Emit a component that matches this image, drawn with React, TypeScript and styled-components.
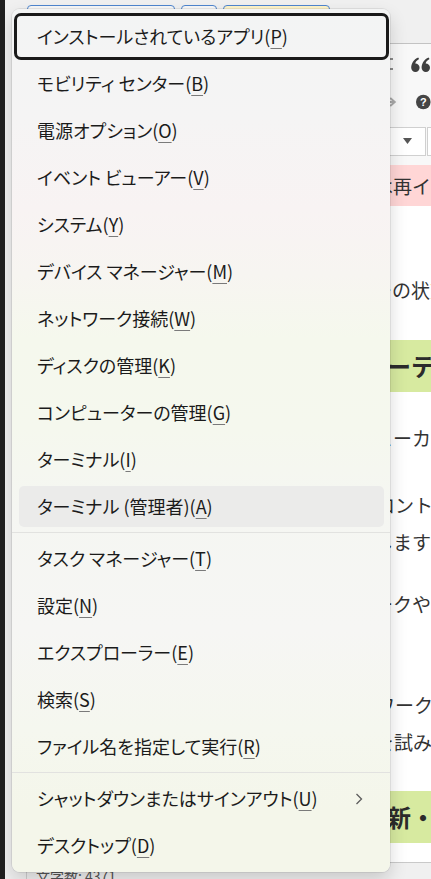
import React from "react";
import styled, { createGlobalStyle } from "styled-components";

const Global = createGlobalStyle`
  html, body { margin: 0; padding: 0; }
  body {
    width: 431px; height: 879px; overflow: hidden;
    font-family: "Noto Sans CJK JP", "Noto Sans", sans-serif;
    background: #f0f0f0;
  }
  #root { width: 431px; height: 879px; }
`;

const Screen = styled.div`
  position: relative;
  display: flex;
  width: 431px;
  height: 879px;
  overflow: hidden;
  background: #f0f0f0;
`;

const DarkStrip = styled.div`
  width: 5px;
  flex: none;
  background: #1f1f1f;
`;

const Main = styled.div`
  flex: 1;
  min-width: 0;
  display: flex;
  flex-direction: column;
`;

const TopBar = styled.div`
  height: 43px;
  flex: none;
  display: flex;
  gap: 6px;
  padding: 5px 0 0 22px;
  box-sizing: border-box;
`;

const TopButton = styled.div<{ $w: number; $warm?: boolean }>`
  width: ${(p) => p.$w}px;
  height: 30px;
  box-sizing: border-box;
  border: 1px solid #4f86cf;
  border-radius: 4px;
  background: ${(p) => (p.$warm ? "linear-gradient(#fdf3c8, #f7f0dc)" : "#f7f7f7")};
`;

const Workspace = styled.div`
  flex: 1;
  display: flex;
  flex-direction: column;
  margin-left: 21px;
  border-top: 1px solid #c3c3c3;
  border-left: 1px solid #cfcfcf;
  min-width: 0;
`;

const Toolbar = styled.div`
  background: #f8f8f8;
  display: flex;
  flex-direction: column;
  height: 121px;
  flex: none;
`;

const ToolRow = styled.div<{ $h: number; $pl: number; $gap: number }>`
  height: ${(p) => p.$h}px;
  display: flex;
  align-items: center;
  gap: ${(p) => p.$gap}px;
  padding-left: ${(p) => p.$pl}px;
  white-space: nowrap;
`;

const Select = styled.div<{ $w: number }>`
  width: ${(p) => p.$w}px;
  height: 29px;
  flex: none;
  box-sizing: border-box;
  border: 1px solid #d0d0d0;
  background: #fff;
  display: flex;
  align-items: center;
  justify-content: flex-end;
  padding-right: 13px;
`;

const Content = styled.div`
  flex: 1;
  background: #fff;
  display: flex;
  flex-direction: column;
  border-bottom: 1px solid #c9c9c9;
  overflow: hidden;
`;

const Notice = styled.div<{ $pl: number }>`
  height: 41px;
  flex: none;
  background: #ffd6d6;
  font-size: 19px;
  line-height: 41px;
  color: #333;
  white-space: nowrap;
  padding-left: ${(p) => p.$pl}px;
`;

const Para = styled.p<{ $mt: number }>`
  margin: ${(p) => p.$mt}px 0 0 0;
  font-size: 19px;
  line-height: 37px;
  color: #333;
  white-space: nowrap;
`;

const Line = styled.span<{ $pl: number }>`
  display: block;
  padding-left: ${(p) => p.$pl}px;
`;

const Heading = styled.h2<{ $mt: number; $pl: number }>`
  margin: ${(p) => p.$mt}px 0 0 0;
  height: 52px;
  flex: none;
  background: #d7eaa0;
  font-size: 24px;
  font-weight: 700;
  line-height: 52px;
  color: #2b2b2b;
  white-space: nowrap;
  padding-left: ${(p) => p.$pl}px;
`;

const StatusBar = styled.div`
  height: 12px;
  flex: none;
  font-size: 14px;
  line-height: 18px;
  color: #555;
  padding: 4px 0 0 9px;
  white-space: nowrap;
  overflow: hidden;
`;

/* ---------- Context menu (overlay) ---------- */

const Menu = styled.div`
  position: absolute;
  left: 12px;
  top: 9px;
  width: 378px;
  height: 863px;
  box-sizing: border-box;
  padding: 4px 0 3px;
  border-radius: 8px;
  z-index: 10;
  background: linear-gradient(
    to bottom,
    #f3f4f4 0px,
    #f5f4f4 110px,
    #f8f3f3 200px,
    #f7f5f1 265px,
    #f5f8ed 330px,
    #f5f8ee 420px,
    #f5f6f2 500px,
    #f6f6f4 620px,
    #f5f7ef 720px,
    #f4f6ea 800px,
    #f4f6ea 863px
  );
  box-shadow: 0 0 0 1px rgba(0, 0, 0, 0.07), 0 8px 18px rgba(0, 0, 0, 0.16);
  font-family: "Noto Sans CJK JP", "Noto Sans", sans-serif;
  font-feature-settings: "palt";
`;

const MenuList = styled.div`
  position: relative;
  isolation: isolate;
  display: flex;
  flex-direction: column;
`;

const Item = styled.div<{ $focused?: boolean; $hover?: boolean }>`
  position: relative;
  height: 47px;
  flex: none;
  display: flex;
  align-items: center;
  padding: 0 0 1px 25px;
  box-sizing: border-box;
  font-size: 18px;
  color: #1b1b1b;
  white-space: nowrap;

  &::before {
    content: "";
    position: absolute;
    top: 3px;
    bottom: 3px;
    left: 7px;
    right: 6px;
    border-radius: 5px;
    background: ${(p) => (p.$hover ? "#ebebea" : "transparent")};
    z-index: -1;
  }

  &::after {
    content: "";
    position: absolute;
    top: 0;
    bottom: 0;
    left: 2px;
    right: 1px;
    border-radius: 7px;
    border: 3px solid #1a1a1a;
    display: ${(p) => (p.$focused ? "block" : "none")};
    pointer-events: none;
  }
`;

const Label = styled.span`
  position: relative;
  z-index: 1;
`;

const Key = styled.span`
  text-decoration: underline;
  text-decoration-color: #7a7a7a;
  text-decoration-thickness: 1px;
  text-underline-offset: 4px;
`;

const Chevron = styled.svg`
  margin-left: auto;
  margin-right: 27px;
  margin-top: 2px;
  flex: none;
`;

const Separator = styled.div`
  height: 5px;
  flex: none;
  display: flex;
  align-items: center;
  &::before {
    content: "";
    flex: 1;
    height: 1px;
    background: #e2e2e0;
  }
`;

type Entry =
  | { sep: true }
  | { sep?: false; label: string; key: string; focused?: boolean; hover?: boolean; submenu?: boolean };

const entries: Entry[] = [
  { label: "インストールされているアプリ", key: "P", focused: true },
  { label: "モビリティ センター", key: "B" },
  { label: "電源オプション", key: "O" },
  { label: "イベント ビューアー", key: "V" },
  { label: "システム", key: "Y" },
  { label: "デバイス マネージャー", key: "M" },
  { label: "ネットワーク接続", key: "W" },
  { label: "ディスクの管理", key: "K" },
  { label: "コンピューターの管理", key: "G" },
  { label: "ターミナル", key: "I" },
  { label: "ターミナル (管理者)", key: "A", hover: true },
  { sep: true },
  { label: "タスク マネージャー", key: "T" },
  { label: "設定", key: "N" },
  { label: "エクスプローラー", key: "E" },
  { label: "検索", key: "S" },
  { label: "ファイル名を指定して実行", key: "R" },
  { sep: true },
  { label: "シャットダウンまたはサインアウト", key: "U", submenu: true },
  { label: "デスクトップ", key: "D" },
];

function QuoteIcon() {
  const six = "M0.2 10.8C0.2 6.2 2.6 2.5 7.2 0.4L8.1 2C5.5 3.5 4.4 5.2 4.3 6.6A4.2 4.2 0 1 1 0.2 10.8Z";
  return (
    <svg width="19" height="15" viewBox="0 0 19 15">
      <g fill="#3e3e3e">
        <path d={six} />
        <path d={six} transform="translate(10.4 0)" />
      </g>
    </svg>
  );
}

export default function App() {
  return (
    <>
      <Global />
      <Screen>
        <DarkStrip />
        <Main>
          <TopBar>
            <TopButton $w={148} />
            <TopButton $w={36} />
            <TopButton $w={107} $warm />
          </TopBar>
          <Workspace>
            <Toolbar>
              <ToolRow $h={40} $pl={348} $gap={18}>
                <svg width="18" height="14" viewBox="0 0 18 14">
                  <g fill="#8a8a8a">
                    <rect x="0" y="1" width="18" height="2" />
                    <rect x="0" y="6" width="14" height="2" />
                    <rect x="0" y="11" width="18" height="2" />
                  </g>
                </svg>
                <QuoteIcon />
              </ToolRow>
              <ToolRow $h={36} $pl={355} $gap={18}>
                <svg width="18" height="14" viewBox="0 0 18 14">
                  <path d="M1 7h12M9 2.5l5 4.5-5 4.5" fill="none" stroke="#a9a9a9" strokeWidth="2.2" />
                </svg>
                <svg width="16" height="16" viewBox="0 0 16 16">
                  <circle cx="8" cy="8" r="8" fill="#454545" />
                  <text x="8" y="12.5" textAnchor="middle" fontSize="12" fontWeight="700" fill="#fff" fontFamily="Liberation Sans, sans-serif">?</text>
                </svg>
              </ToolRow>
              <ToolRow $h={42} $pl={302} $gap={1}>
                <Select $w={97}>
                  <svg width="9" height="6" viewBox="0 0 9 6">
                    <path d="M0 0h9L4.5 6z" fill="#555" />
                  </svg>
                </Select>
                <Select $w={80} />
              </ToolRow>
            </Toolbar>
            <Content>
              <Notice $pl={347}>は再インストールしてください</Notice>
              <Para $mt={65}>
                <Line $pl={346}>ーの状態を確認します</Line>
              </Para>
              <Heading $mt={32} $pl={360}>ーテーブル</Heading>
              <Para $mt={27}>
                <Line $pl={347}>ューカードの確認</Line>
              </Para>
              <Para $mt={30}>
                <Line $pl={349}>ロントから確認</Line>
                <Line $pl={347}>します</Line>
              </Para>
              <Para $mt={25}>
                <Line $pl={347}>ークやルーター</Line>
              </Para>
              <Para $mt={64}>
                <Line $pl={349}>ワークの設定</Line>
                <Line $pl={348}>を試みてください</Line>
              </Para>
              <Heading $mt={31} $pl={360}>新・更新</Heading>
            </Content>
            <StatusBar>文字数: 4371</StatusBar>
          </Workspace>
        </Main>

        <Menu>
          <MenuList>
            {entries.map((e, i) =>
              e.sep ? (
                <Separator key={i} />
              ) : (
                <Item key={i} $focused={e.focused} $hover={e.hover}>
                  <Label>
                    {e.label}(<Key>{e.key}</Key>)
                  </Label>
                  {e.submenu && (
                    <Chevron width="8" height="12" viewBox="0 0 8 12">
                      <path d="M1.5 1l5 5-5 5" fill="none" stroke="#5c5c5c" strokeWidth="1.3" />
                    </Chevron>
                  )}
                </Item>
              )
            )}
          </MenuList>
        </Menu>
      </Screen>
    </>
  );
}
